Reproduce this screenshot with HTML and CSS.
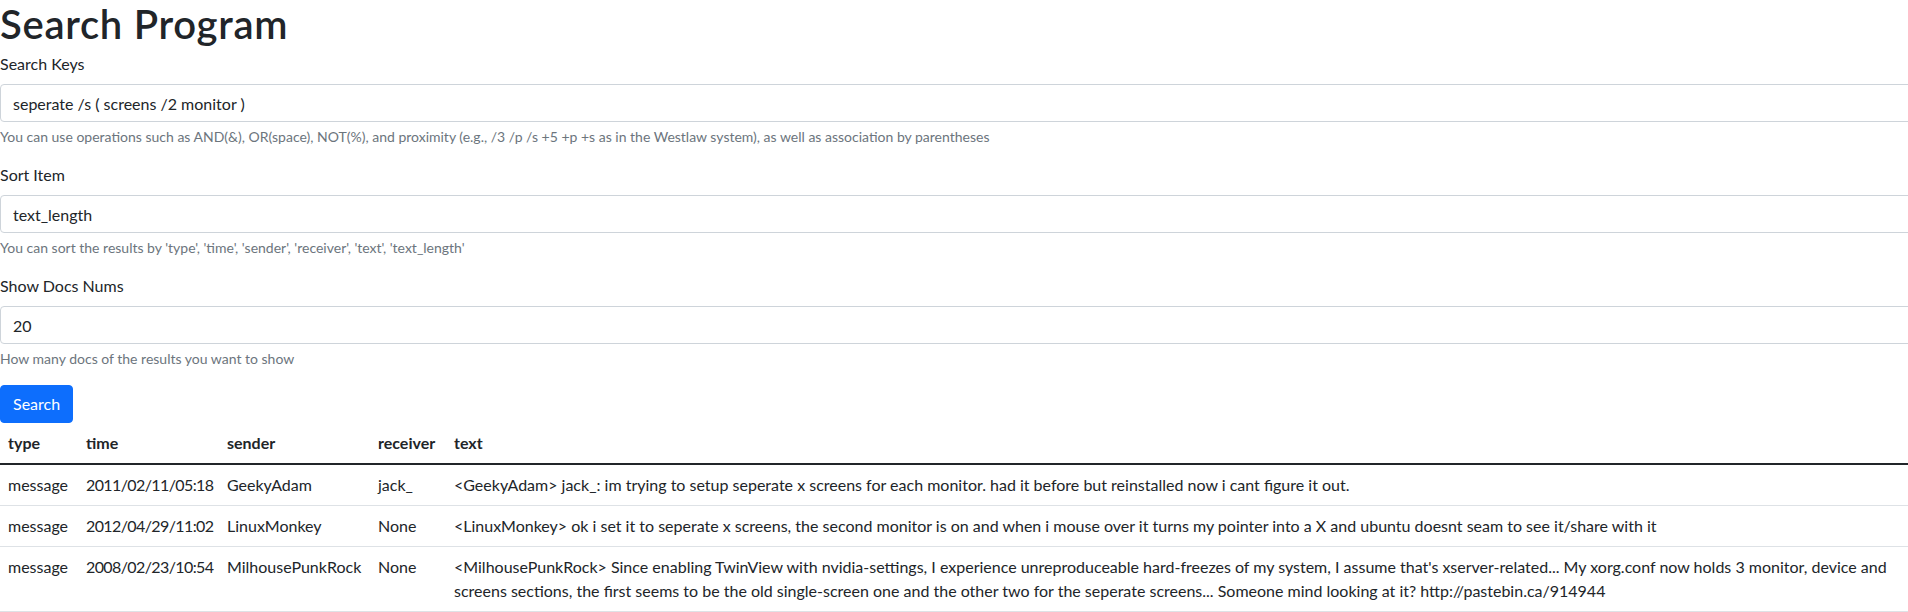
FILE: index.html
```html
<!DOCTYPE html>
<html lang="en">
<head>
<meta charset="utf-8">
<title>Search Program</title>
<link rel="stylesheet" href="styles.css">
</head>
<body>
<div class="page">
  <h1 class="title">Search Program</h1>
  <form class="search-form">
    <div class="field">
      <label class="field-label" for="keys">Search Keys</label>
      <input class="field-input" id="keys" type="text" value="seperate /s ( screens /2 monitor )">
      <div class="field-help">You can use operations such as AND(&amp;), OR(space), NOT(%), and proximity (e.g., /3 /p /s +5 +p +s as in the Westlaw system), as well as association by parentheses</div>
    </div>
    <div class="field">
      <label class="field-label" for="sort">Sort Item</label>
      <input class="field-input" id="sort" type="text" value="text_length">
      <div class="field-help">You can sort the results by 'type', 'time', 'sender', 'receiver', 'text', 'text_length'</div>
    </div>
    <div class="field">
      <label class="field-label" for="nums">Show Docs Nums</label>
      <input class="field-input" id="nums" type="text" value="20">
      <div class="field-help">How many docs of the results you want to show</div>
    </div>
    <button class="btn-search" type="button">Search</button>
  </form>
  <table class="results">
    <thead>
      <tr>
        <th class="col-type">type</th>
        <th class="col-time">time</th>
        <th class="col-sender">sender</th>
        <th class="col-receiver">receiver</th>
        <th class="col-text">text</th>
      </tr>
    </thead>
    <tbody>
      <tr>
        <td>message</td>
        <td class="cell-time">2011/02/11/05:18</td>
        <td>GeekyAdam</td>
        <td>jack_</td>
        <td>&lt;GeekyAdam&gt; jack_: im trying to setup seperate x screens for each monitor. had it before but reinstalled now i cant figure it out.</td>
      </tr>
      <tr>
        <td>message</td>
        <td class="cell-time">2012/04/29/11:02</td>
        <td>LinuxMonkey</td>
        <td>None</td>
        <td>&lt;LinuxMonkey&gt; ok i set it to seperate x screens, the second monitor is on and when i mouse over it turns my pointer into a X and ubuntu doesnt seam to see it/share with it</td>
      </tr>
      <tr>
        <td>message</td>
        <td class="cell-time">2008/02/23/10:54</td>
        <td>MilhousePunkRock</td>
        <td>None</td>
        <td>&lt;MilhousePunkRock&gt; Since enabling TwinView with nvidia-settings, I experience unreproduceable hard-freezes of my system, I assume that's xserver-related... My xorg.conf now holds 3 monitor, device and screens sections, the first seems to be the old single-screen one and the other two for the seperate screens... Someone mind looking at it? http://pastebin.ca/914944</td>
      </tr>
    </tbody>
  </table>
</div>
</body>
</html>
```
FILE: styles.css
```css
*, *::before, *::after { box-sizing: border-box; }

html { overflow: hidden; }

body {
  margin: 0;
  font-family: Lato, "Liberation Sans", sans-serif;
  font-size: 16px;
  line-height: 1.5;
  color: #212529;
  background: #fff;
}

.page {
  width: 100%;
}

.title {
  margin: 0 0 4px;
  font-size: 40px;
  font-weight: 600;
  line-height: 48px;
  letter-spacing: 0.7px;
}

.search-form {
  display: flex;
  flex-direction: column;
  align-items: flex-start;
}

.field {
  width: 100%;
  margin-bottom: 16px;
}

.field-label {
  display: block;
  margin-bottom: 8px;
}

.field-input {
  display: block;
  width: calc(100% + 6px);
  height: 38px;
  padding: 6px 12px;
  font: inherit;
  color: #212529;
  background: #fff;
  border: 1px solid #ced4da;
  border-radius: 4px;
  outline: none;
}

.field-help {
  margin-top: 4px;
  font-size: 14px;
  line-height: 21px;
  color: #6c757d;
}

.btn-search {
  height: 38px;
  padding: 6px 12px;
  font: inherit;
  color: #fff;
  background: #0d6efd;
  border: 1px solid #0d6efd;
  border-radius: 4px;
}

.results {
  width: 100%;
  table-layout: fixed;
  border-collapse: collapse;
}

.results th,
.results td {
  padding: 8px;
  text-align: left;
  vertical-align: top;
  border-bottom: 1px solid #dee2e6;
}

.results th {
  font-weight: 700;
  border-bottom: 2px solid #212529;
  white-space: nowrap;
}

.cell-time { letter-spacing: -0.6px; }

.col-type { width: 78px; }
.col-time { width: 141px; }
.col-sender { width: 151px; }
.col-receiver { width: 76px; }
```
